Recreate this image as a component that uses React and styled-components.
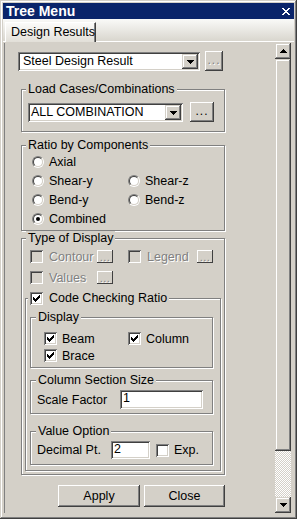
import React from 'react';
import styled, { createGlobalStyle, css } from 'styled-components';

const FACE = '#d4d0c8';
const HI = '#ffffff';
const SH = '#808080';
const DK = '#404040';
const NAVY = '#0a246a';

const GlobalStyle = createGlobalStyle`
  *, *::before, *::after { box-sizing: border-box; }
  html, body { margin: 0; padding: 0; background: ${FACE}; }
  body {
    font-family: "Liberation Sans", Arial, sans-serif;
    font-size: 12.5px;
    color: #000;
  }
`;

const sunken = css`
  box-shadow: inset 1px 1px 0 ${SH}, inset -1px -1px 0 ${HI}, inset 2px 2px 0 ${DK}, inset -2px -2px 0 ${FACE};
`;
const raised = css`
  background: ${FACE};
  box-shadow: inset -1px -1px 0 ${DK}, inset 1px 1px 0 ${HI}, inset -2px -2px 0 ${SH};
`;
const raised3 = css`
  background: ${FACE};
  box-shadow: inset -1px -1px 0 ${DK}, inset 1px 1px 0 ${FACE}, inset -2px -2px 0 ${SH}, inset 2px 2px 0 ${HI};
`;

const Window = styled.div`
  width: 297px;
  height: 519px;
  padding: 3px;
  display: flex;
  flex-direction: column;
  background: ${FACE};
  box-shadow: inset -1px -1px 0 ${DK}, inset 1px 1px 0 ${FACE}, inset -2px -2px 0 ${SH}, inset 2px 2px 0 ${HI};
  overflow: hidden;
`;

const TitleBar = styled.div`
  height: 16px;
  flex: none;
  background: ${NAVY};
  display: flex;
  align-items: center;
  justify-content: space-between;
  padding: 0 4px 0 3px;
`;

const TitleText = styled.span`
  color: #fff;
  font-weight: bold;
  font-size: 14px;
  line-height: 16px;
`;

const TabStrip = styled.div`
  height: 23px;
  flex: none;
  padding: 3px 0 0 2px;
  background: linear-gradient(#fafaf8, #d9d6ce);
  border-bottom: 1px solid ${HI};
  display: flex;
  align-items: flex-start;
`;

const Tab = styled.div`
  width: 91px;
  height: 20px;
  margin-bottom: -1px;
  padding-left: 5px;
  background: linear-gradient(#fbfbf9, #e2dfd8);
  border-left: 1px solid ${HI};
  border-top: 1px solid ${HI};
  border-right: 1px solid ${DK};
  box-shadow: inset -1px 0 0 ${SH};
  line-height: 18px;
  white-space: nowrap;
`;

const Body = styled.div`
  flex: 1;
  min-height: 0;
  display: flex;
  padding: 1px 3px 3px 1px;
`;

const FormArea = styled.div`
  flex: 1;
  border-left: 1px solid ${SH};
  padding: 8px 0 0 13px;
  display: flex;
  flex-direction: column;
  align-items: flex-start;
  overflow: hidden;
`;

const ScrollBar = styled.div`
  width: 16px;
  flex: none;
  display: flex;
  flex-direction: column;
`;

const ScrollBtn = styled.div`
  ${raised3};
  height: 16px;
  flex: none;
  display: flex;
  align-items: center;
  justify-content: center;
`;

const Thumb = styled.div`
  ${raised3};
  height: 392px;
  flex: none;
`;

const Track = styled.div`
  flex: 1;
  background: repeating-conic-gradient(${FACE} 0% 25%, #ffffff 0% 50%) 0 0 / 2px 2px;
`;

const Row = styled.div`
  display: flex;
  align-items: ${p => p.$align || 'center'};
  gap: ${p => p.$gap || 0}px;
  margin-top: ${p => p.$mt || 0}px;
  margin-left: ${p => p.$ml || 0}px;
`;

const Group = styled.div`
  width: ${p => p.$w}px;
  margin-top: ${p => p.$mt}px;
  margin-left: ${p => p.$ml}px;
  padding-bottom: ${p => p.$pb}px;
  border: 1px solid ${SH};
  box-shadow: inset 1px 1px 0 ${HI}, 1px 1px 0 ${HI};
  display: flex;
  flex-direction: column;
  align-items: flex-start;
`;

const Legend = styled.div`
  margin-top: -8px;
  margin-left: ${p => (p.$ml === undefined ? 4 : p.$ml)}px;
  height: 14px;
  line-height: 14px;
  padding: 0 2px;
  background: ${FACE};
  display: flex;
  align-items: center;
  gap: ${p => p.$gap || 0}px;
  white-space: nowrap;
`;

const ComboBox = styled.div`
  ${sunken};
  background: #fff;
  width: ${p => p.$w}px;
  height: 19px;
  margin-top: 1px;
  padding: 2px;
  display: flex;
`;

const ComboText = styled.div`
  flex: 1;
  padding-left: ${p => p.$pl}px;
  line-height: 15px;
  white-space: nowrap;
  overflow: hidden;
`;

const DropBtn = styled.div`
  ${raised3};
  width: 16px;
  flex: none;
  display: flex;
  align-items: center;
  justify-content: center;
`;

const DotsButton = styled.div`
  ${raised};
  width: ${p => p.$w}px;
  height: 20px;
  flex: none;
  display: flex;
  align-items: center;
  justify-content: center;
  padding-bottom: 2px;
  font-size: 12px;
  letter-spacing: 1px;
  color: ${p => (p.$disabled ? SH : '#000')};
  text-shadow: ${p => (p.$disabled ? `1px 1px 0 ${HI}` : 'none')};
`;

const SmallDots = styled.div`
  width: 16px;
  height: 13px;
  flex: none;
  background: ${FACE};
  box-shadow: inset -1px -1px 0 ${DK}, inset 1px 1px 0 ${HI};
  display: flex;
  align-items: flex-end;
  justify-content: center;
  font-size: 11px;
  line-height: 11px;
  letter-spacing: 0.5px;
  color: ${SH};
  text-shadow: 1px 1px 0 ${HI};
`;

const OptionGrid = styled.div`
  display: grid;
  grid-template-columns: ${p => p.$col}px auto;
  grid-auto-rows: ${p => p.$row}px;
  row-gap: ${p => p.$rowGap || 0}px;
  margin-top: ${p => p.$mt || 0}px;
  margin-left: ${p => p.$ml}px;
`;

const Item = styled.label`
  display: flex;
  align-items: center;
  gap: ${p => p.$gap}px;
  white-space: nowrap;
`;

const ItemLabel = styled.span`
  width: ${p => (p.$w ? `${p.$w}px` : 'auto')};
  flex: none;
  color: ${p => (p.$disabled ? SH : '#000')};
  text-shadow: ${p => (p.$disabled ? `1px 1px 0 ${HI}` : 'none')};
`;

const Box = styled.span`
  ${sunken};
  width: 13px;
  height: 13px;
  flex: none;
  background: ${p => (p.$disabled ? FACE : '#fff')};
  display: flex;
  align-items: center;
  justify-content: center;
`;

const RadioOuter = styled.span`
  width: 12px;
  height: 12px;
  flex: none;
  border-radius: 50%;
  border: 1px solid;
  border-color: ${SH} ${HI} ${HI} ${SH};
  display: flex;
`;

const RadioInner = styled.span`
  flex: 1;
  border-radius: 50%;
  border: 1px solid;
  border-color: ${DK} ${FACE} ${FACE} ${DK};
  background: #fff;
  display: flex;
  align-items: center;
  justify-content: center;
`;

const Dot = styled.span`
  width: 4px;
  height: 4px;
  border-radius: 50%;
  background: #000;
`;

const FieldLabel = styled.span`
  width: ${p => p.$w}px;
  flex: none;
  white-space: nowrap;
`;

const TextBox = styled.div`
  ${sunken};
  background: #fff;
  width: ${p => p.$w}px;
  height: ${p => p.$h}px;
  flex: none;
  padding: 2px 2px 2px 3px;
  line-height: 13px;
`;

const ButtonRow = styled.div`
  display: flex;
  gap: 4px;
  margin-top: 10px;
  margin-left: 40px;
`;

const PushButton = styled.div`
  ${raised};
  width: ${p => p.$w}px;
  height: 22px;
  display: flex;
  align-items: center;
  justify-content: center;
`;

const CloseIcon = () => (
  <svg width="8" height="7" viewBox="0 0 8 7" shapeRendering="crispEdges">
    <path d="M0 0h2v1h1v1h2v-1h1v-1h2v1h-1v1h-1v1h-1v1h1v1h1v1h1v1h-2v-1h-1v-1h-2v1h-1v1h-2v-1h1v-1h1v-1h1v-1h-1v-1h-1v-1h-1z" fill="#fff" />
  </svg>
);

const ArrowDown = () => (
  <svg width="7" height="4" viewBox="0 0 7 4" shapeRendering="crispEdges">
    <path d="M0 0h7v1h-1v1h-1v1h-1v1h-1v-1h-1v-1h-1v-1h-1z" fill="#000" />
  </svg>
);

const ArrowUp = () => (
  <svg width="7" height="4" viewBox="0 0 7 4" shapeRendering="crispEdges">
    <path d="M3 0h1v1h1v1h1v1h1v1h-7v-1h1v-1h1v-1h1z" fill="#000" />
  </svg>
);

const CheckMark = () => (
  <svg width="7" height="7" viewBox="0 0 7 7" shapeRendering="crispEdges">
    <path
      d="M0 2h1v3h-1z M1 3h1v3h-1z M2 4h1v3h-1z M3 3h1v3h-1z M4 2h1v3h-1z M5 1h1v3h-1z M6 0h1v3h-1z"
      fill="#000"
    />
  </svg>
);

const CheckBox = ({ checked, disabled }) => (
  <Box $disabled={disabled}>{checked && <CheckMark />}</Box>
);

const CheckItem = ({ label, checked, disabled, labelW, gap = 6, dots }) => (
  <Item $gap={gap}>
    <CheckBox checked={checked} disabled={disabled} />
    <ItemLabel $w={labelW} $disabled={disabled}>{label}</ItemLabel>
    {dots && <SmallDots>...</SmallDots>}
  </Item>
);

const Radio = ({ label, checked }) => (
  <Item $gap={5}>
    <RadioOuter>
      <RadioInner>{checked && <Dot />}</RadioInner>
    </RadioOuter>
    <ItemLabel>{label}</ItemLabel>
  </Item>
);

const Combo = ({ w, pl, children }) => (
  <ComboBox $w={w}>
    <ComboText $pl={pl}>{children}</ComboText>
    <DropBtn>
      <ArrowDown />
    </DropBtn>
  </ComboBox>
);

export default function App() {
  return (
    <>
      <GlobalStyle />
      <Window>
        <TitleBar>
          <TitleText>Tree Menu</TitleText>
          <CloseIcon />
        </TitleBar>
        <TabStrip>
          <Tab>Design Results</Tab>
        </TabStrip>
        <Body>
          <FormArea>
            <Row $align="flex-start" $gap={5}>
              <Combo w={182} pl={3}>Steel Design Result</Combo>
              <DotsButton $w={18} $disabled>...</DotsButton>
            </Row>

            <Group $w={204} $mt={18} $ml={3} $pb={9}>
              <Legend>Load Cases/Combinations</Legend>
              <Row $align="flex-start" $gap={7} $mt={6} $ml={6}>
                <Combo w={155} pl={1}>ALL COMBINATION</Combo>
                <DotsButton $w={24}>...</DotsButton>
              </Row>
            </Group>

            <Group $w={204} $mt={13} $ml={3} $pb={2}>
              <Legend>Ratio by Components</Legend>
              <OptionGrid $ml={10} $col={96} $row={19}>
                <Radio label="Axial" />
                <span />
                <Radio label="Shear-y" />
                <Radio label="Shear-z" />
                <Radio label="Bend-y" />
                <Radio label="Bend-z" />
                <Radio label="Combined" checked />
              </OptionGrid>
            </Group>

            <Group $w={204} $mt={7} $ml={3} $pb={3}>
              <Legend>Type of Display</Legend>
              <OptionGrid $ml={8} $col={98} $row={19} $rowGap={2} $mt={2}>
                <CheckItem disabled label="Contour" labelW={42} dots />
                <CheckItem disabled label="Legend" labelW={44} dots />
                <CheckItem disabled label="Values" labelW={42} dots />
              </OptionGrid>

              <Group $w={196} $mt={11} $ml={3} $pb={5}>
                <Legend $ml={2} $gap={6}>
                  <CheckBox checked />
                  Code Checking Ratio
                </Legend>

                <Group $w={183} $mt={12} $ml={4} $pb={3}>
                  <Legend $ml={5}>Display</Legend>
                  <OptionGrid $ml={13} $col={84} $row={17} $mt={6}>
                    <CheckItem checked label="Beam" gap={5} />
                    <CheckItem checked label="Column" gap={5} />
                    <CheckItem checked label="Brace" gap={5} />
                  </OptionGrid>
                </Group>

                <Group $w={183} $mt={12} $ml={4} $pb={4}>
                  <Legend $ml={5}>Column Section Size</Legend>
                  <Row $mt={3} $ml={6}>
                    <FieldLabel $w={83}>Scale Factor</FieldLabel>
                    <TextBox $w={83} $h={19}>1</TextBox>
                  </Row>
                </Group>

                <Group $w={183} $mt={17} $ml={4} $pb={5}>
                  <Legend $ml={5}>Value Option</Legend>
                  <Row $mt={3} $ml={6} $gap={6}>
                    <FieldLabel $w={68}>Decimal Pt.</FieldLabel>
                    <TextBox $w={39} $h={18}>2</TextBox>
                    <CheckItem label="Exp." gap={5} />
                  </Row>
                </Group>
              </Group>
            </Group>

            <ButtonRow>
              <PushButton $w={82}>Apply</PushButton>
              <PushButton $w={81}>Close</PushButton>
            </ButtonRow>
          </FormArea>
          <ScrollBar>
            <ScrollBtn>
              <ArrowUp />
            </ScrollBtn>
            <Thumb />
            <Track />
            <ScrollBtn>
              <ArrowDown />
            </ScrollBtn>
          </ScrollBar>
        </Body>
      </Window>
    </>
  );
}
